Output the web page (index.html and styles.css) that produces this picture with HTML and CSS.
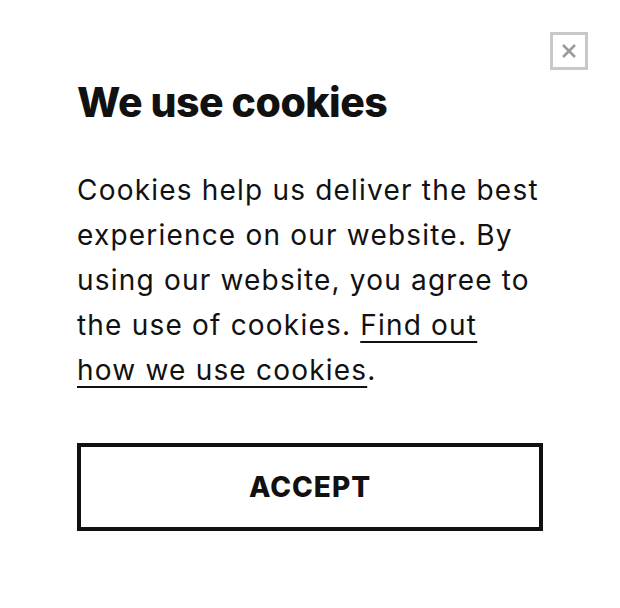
FILE: index.html
```html
<!DOCTYPE html>
<html lang="en">
<head>
    <meta charset="UTF-8">
    <meta name="viewport" content="width=device-width, initial-scale=1.0">
    <title>Cookie notice</title>
    <link rel="stylesheet" href="styles.css">
</head>
<body>
    <div class="cookie-dialog">
        <button class="close-btn" aria-label="Close">
            <svg width="22" height="22" viewBox="0 0 22 22">
                <path d="M5 5 L17 17 M17 5 L5 17" stroke="#9a9a9a" stroke-width="2.5" fill="none"/>
            </svg>
        </button>
        <h1>We use cookies</h1>
        <p class="cookie-text">
            Cookies help us deliver the best experience on our website. By using our website, you agree to the use of cookies. <a href="#">Find out how we use cookies</a>.
        </p>
        <button class="accept-btn">ACCEPT</button>
    </div>
</body>
</html>
```

FILE: styles.css
```css
body {
    margin: 0;
    background: #fff;
    font-family: Inter, "Liberation Sans", sans-serif;
    color: #111;
}
.cookie-dialog {
    position: relative;
    width: 466px;
    padding: 76px 77px 40px;
}
.close-btn {
    position: absolute;
    top: 32px;
    right: 32px;
    width: 38px;
    height: 38px;
    padding: 0;
    border: 3px solid #c8c8c8;
    background: #fff;
    display: flex;
    align-items: center;
    justify-content: center;
}
h1 {
    margin: 0 0 40px;
    font-size: 41px;
    font-weight: 800;
    line-height: 52px;
    letter-spacing: -0.5px;
}
.cookie-text {
    margin: 0 0 50px;
    font-size: 28px;
    line-height: 45px;
    letter-spacing: 1.2px;
}
.cookie-text a {
    color: #111;
    text-decoration: underline;
    text-underline-offset: 6px;
    text-decoration-thickness: 2px;
}
.accept-btn {
    display: block;
    width: 100%;
    height: 88px;
    border: 4px solid #111;
    background: #fff;
    color: #111;
    font-family: inherit;
    font-size: 28px;
    font-weight: 800;
    letter-spacing: 1px;
}
```
